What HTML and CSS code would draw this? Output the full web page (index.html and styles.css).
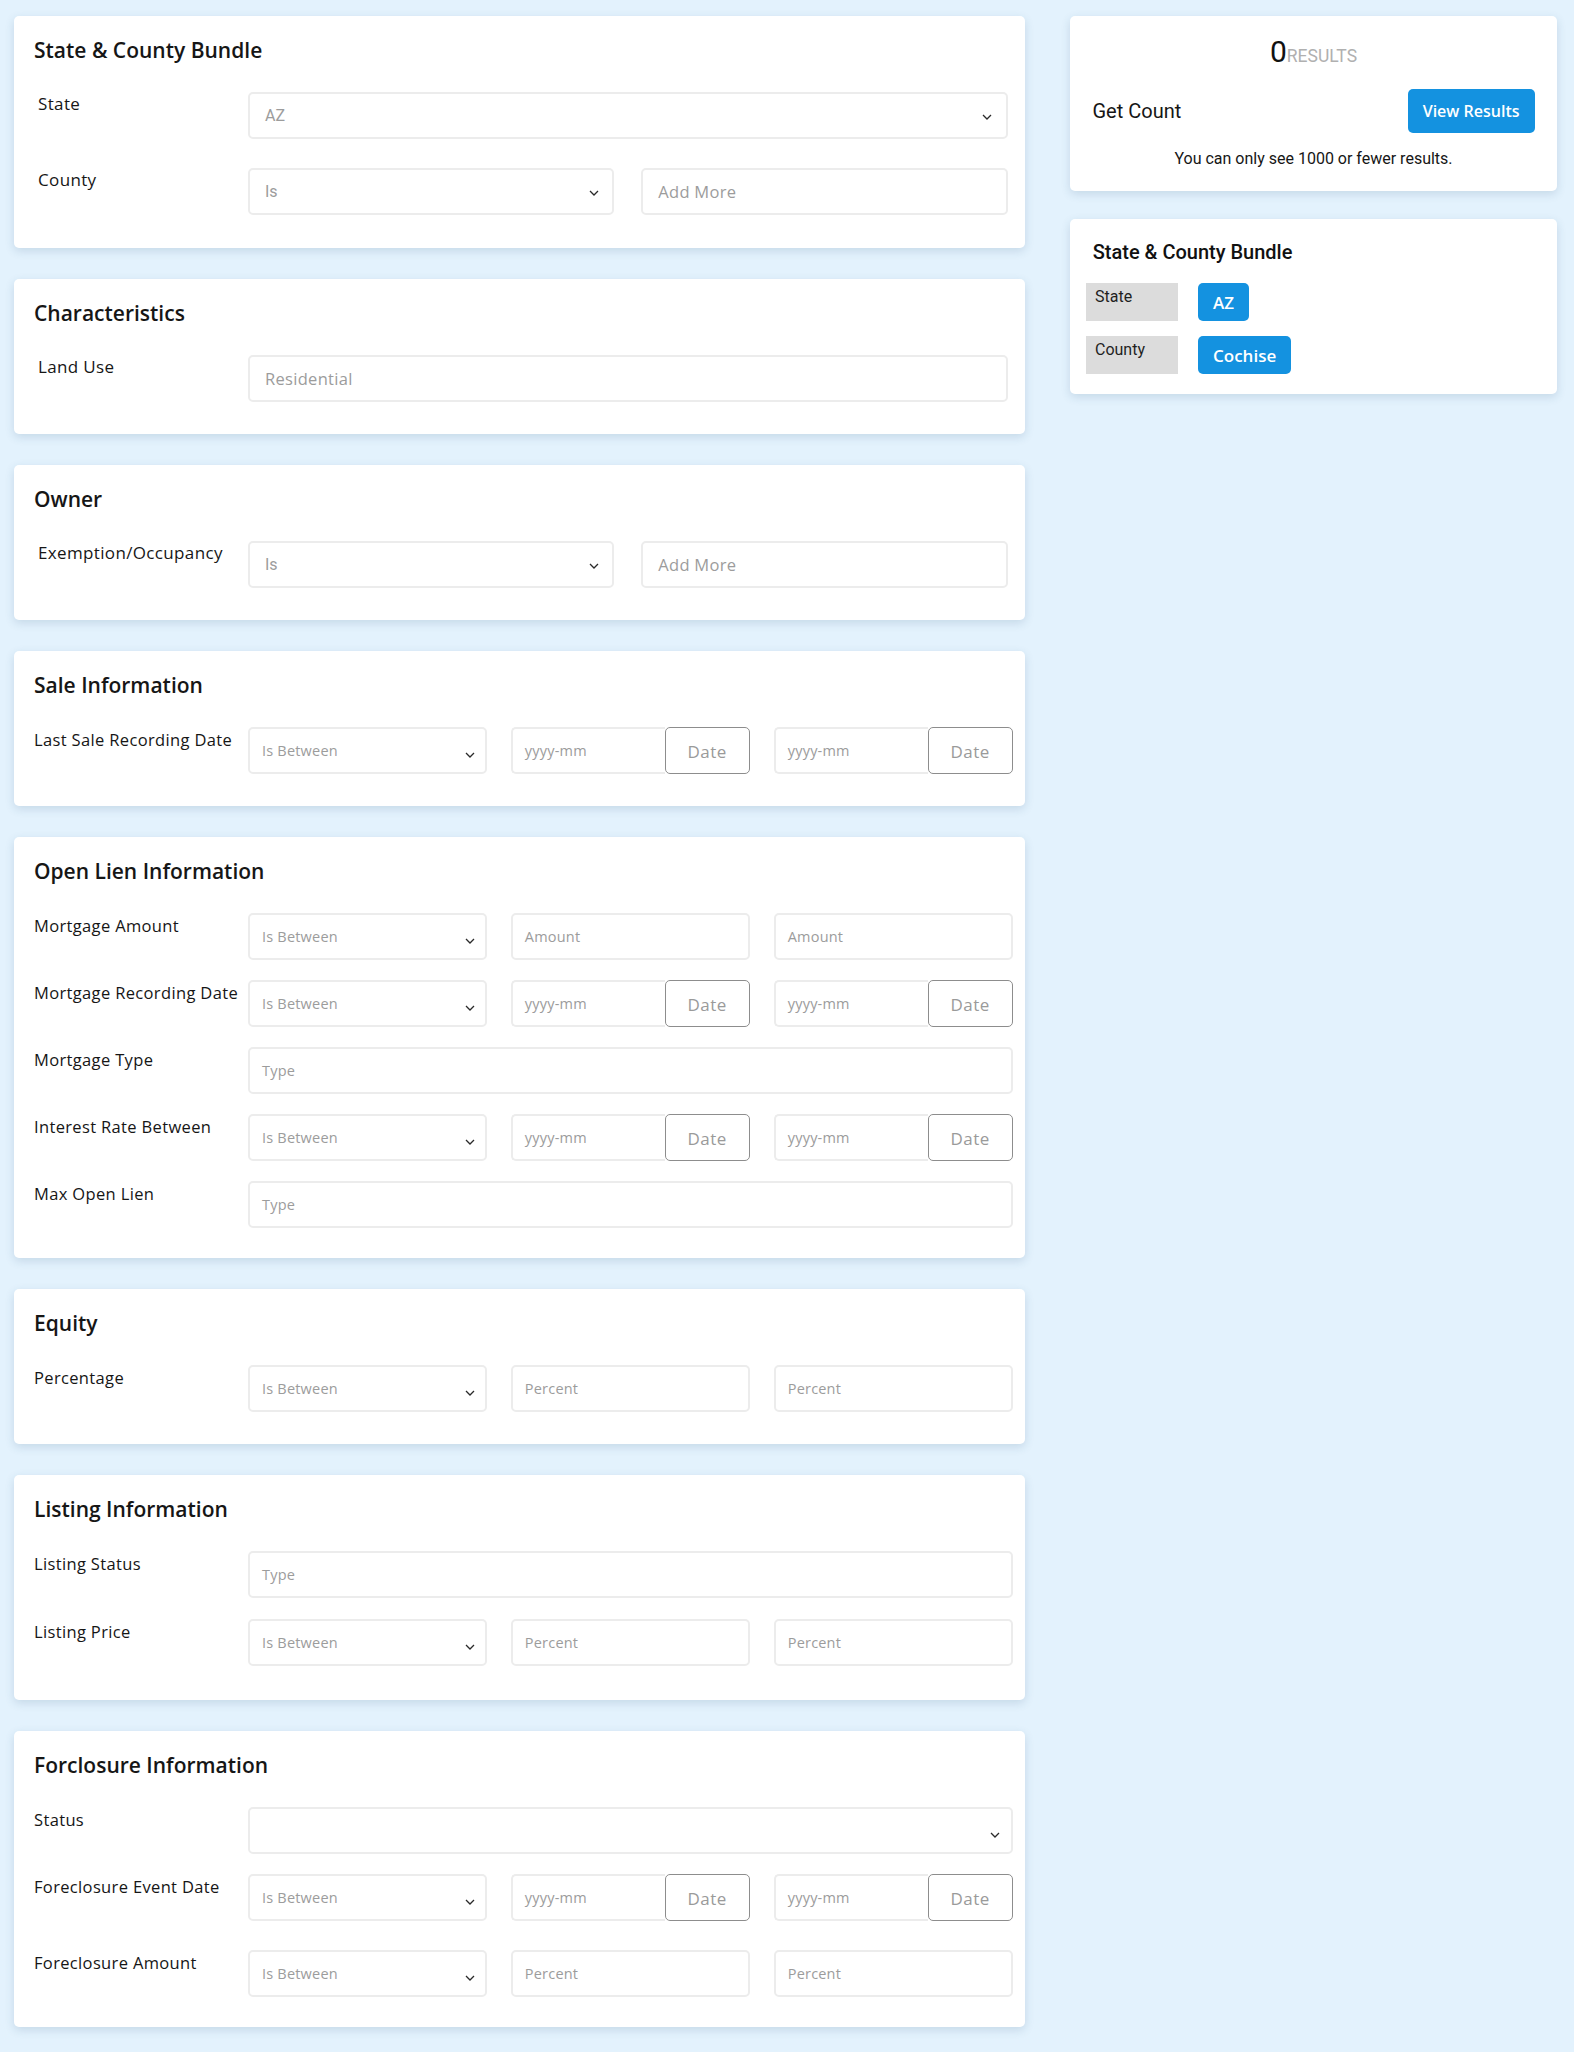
FILE: index.html
```html
<!DOCTYPE html>
<html lang="en">
<head>
<meta charset="utf-8">
<title>Search Filters</title>
<link rel="stylesheet" href="styles.css">
</head>
<body>
<div class="page">
  <main class="filters">

    <section class="card card--simple card--bundle">
      <h2 class="card-title">State &amp; County Bundle</h2>
      <div class="rows rows--loose">
        <div class="row">
          <div class="label">State</div>
          <div class="controls">
            <div class="field field--lg select select--lg"><span>AZ</span><svg class="chev" width="10" height="6" viewBox="0 0 10 6"><path d="M1 1 L5 5 L9 1"/></svg></div>
          </div>
        </div>
        <div class="row">
          <div class="label">County</div>
          <div class="controls controls--two">
            <div class="field field--lg select select--lg"><span>Is</span><svg class="chev" width="10" height="6" viewBox="0 0 10 6"><path d="M1 1 L5 5 L9 1"/></svg></div>
            <div class="field field--lg field--text"><span>Add More</span></div>
          </div>
        </div>
      </div>
    </section>

    <section class="card card--simple">
      <h2 class="card-title">Characteristics</h2>
      <div class="rows">
        <div class="row">
          <div class="label">Land Use</div>
          <div class="controls">
            <div class="field field--lg field--text"><span>Residential</span></div>
          </div>
        </div>
      </div>
    </section>

    <section class="card card--simple">
      <h2 class="card-title">Owner</h2>
      <div class="rows">
        <div class="row">
          <div class="label">Exemption/Occupancy</div>
          <div class="controls controls--two">
            <div class="field field--lg select select--lg"><span>Is</span><svg class="chev" width="10" height="6" viewBox="0 0 10 6"><path d="M1 1 L5 5 L9 1"/></svg></div>
            <div class="field field--lg field--text"><span>Add More</span></div>
          </div>
        </div>
      </div>
    </section>

    <section class="card">
      <h2 class="card-title">Sale Information</h2>
      <div class="rows">
        <div class="row">
          <div class="label">Last Sale Recording Date</div>
          <div class="controls controls--three">
            <div class="field select"><span>Is Between</span><svg class="chev" width="10" height="6" viewBox="0 0 10 6"><path d="M1 1 L5 5 L9 1"/></svg></div>
            <div class="date-group"><div class="field"><span>yyyy-mm</span></div><div class="date-btn">Date</div></div>
            <div class="date-group"><div class="field"><span>yyyy-mm</span></div><div class="date-btn">Date</div></div>
          </div>
        </div>
      </div>
    </section>

    <section class="card card--end-tight">
      <h2 class="card-title">Open Lien Information</h2>
      <div class="rows">
        <div class="row">
          <div class="label">Mortgage Amount</div>
          <div class="controls controls--three">
            <div class="field select"><span>Is Between</span><svg class="chev" width="10" height="6" viewBox="0 0 10 6"><path d="M1 1 L5 5 L9 1"/></svg></div>
            <div class="field"><span>Amount</span></div>
            <div class="field"><span>Amount</span></div>
          </div>
        </div>
        <div class="row">
          <div class="label">Mortgage Recording Date</div>
          <div class="controls controls--three">
            <div class="field select"><span>Is Between</span><svg class="chev" width="10" height="6" viewBox="0 0 10 6"><path d="M1 1 L5 5 L9 1"/></svg></div>
            <div class="date-group"><div class="field"><span>yyyy-mm</span></div><div class="date-btn">Date</div></div>
            <div class="date-group"><div class="field"><span>yyyy-mm</span></div><div class="date-btn">Date</div></div>
          </div>
        </div>
        <div class="row">
          <div class="label">Mortgage Type</div>
          <div class="controls">
            <div class="field"><span>Type</span></div>
          </div>
        </div>
        <div class="row">
          <div class="label">Interest Rate Between</div>
          <div class="controls controls--three">
            <div class="field select"><span>Is Between</span><svg class="chev" width="10" height="6" viewBox="0 0 10 6"><path d="M1 1 L5 5 L9 1"/></svg></div>
            <div class="date-group"><div class="field"><span>yyyy-mm</span></div><div class="date-btn">Date</div></div>
            <div class="date-group"><div class="field"><span>yyyy-mm</span></div><div class="date-btn">Date</div></div>
          </div>
        </div>
        <div class="row">
          <div class="label">Max Open Lien</div>
          <div class="controls">
            <div class="field"><span>Type</span></div>
          </div>
        </div>
      </div>
    </section>

    <section class="card">
      <h2 class="card-title">Equity</h2>
      <div class="rows">
        <div class="row">
          <div class="label">Percentage</div>
          <div class="controls controls--three">
            <div class="field select"><span>Is Between</span><svg class="chev" width="10" height="6" viewBox="0 0 10 6"><path d="M1 1 L5 5 L9 1"/></svg></div>
            <div class="field"><span>Percent</span></div>
            <div class="field"><span>Percent</span></div>
          </div>
        </div>
      </div>
    </section>

    <section class="card card--end-loose">
      <h2 class="card-title">Listing Information</h2>
      <div class="rows rows--listing">
        <div class="row">
          <div class="label">Listing Status</div>
          <div class="controls">
            <div class="field"><span>Type</span></div>
          </div>
        </div>
        <div class="row">
          <div class="label">Listing Price</div>
          <div class="controls controls--three">
            <div class="field select"><span>Is Between</span><svg class="chev" width="10" height="6" viewBox="0 0 10 6"><path d="M1 1 L5 5 L9 1"/></svg></div>
            <div class="field"><span>Percent</span></div>
            <div class="field"><span>Percent</span></div>
          </div>
        </div>
      </div>
    </section>

    <section class="card card--end-tight">
      <h2 class="card-title">Forclosure Information</h2>
      <div class="rows">
        <div class="row">
          <div class="label">Status</div>
          <div class="controls">
            <div class="field select select--status"><span></span><svg class="chev" width="10" height="6" viewBox="0 0 10 6"><path d="M1 1 L5 5 L9 1"/></svg></div>
          </div>
        </div>
        <div class="row">
          <div class="label">Foreclosure Event Date</div>
          <div class="controls controls--three">
            <div class="field select"><span>Is Between</span><svg class="chev" width="10" height="6" viewBox="0 0 10 6"><path d="M1 1 L5 5 L9 1"/></svg></div>
            <div class="date-group"><div class="field"><span>yyyy-mm</span></div><div class="date-btn">Date</div></div>
            <div class="date-group"><div class="field"><span>yyyy-mm</span></div><div class="date-btn">Date</div></div>
          </div>
        </div>
        <div class="row row--spaced">
          <div class="label">Foreclosure Amount</div>
          <div class="controls controls--three">
            <div class="field select"><span>Is Between</span><svg class="chev" width="10" height="6" viewBox="0 0 10 6"><path d="M1 1 L5 5 L9 1"/></svg></div>
            <div class="field"><span>Percent</span></div>
            <div class="field"><span>Percent</span></div>
          </div>
        </div>
      </div>
    </section>

  </main>

  <aside class="summary">
    <section class="card summary-card">
      <div class="results"><span class="results-count">0</span><span class="results-unit">RESULTS</span></div>
      <div class="count-row">
        <span class="count-label">Get Count</span>
        <span class="btn btn--view">View Results</span>
      </div>
      <p class="note">You can only see 1000 or fewer results.</p>
    </section>

    <section class="card bundle-card">
      <h3 class="bundle-title">State &amp; County Bundle</h3>
      <div class="chip-rows">
        <div class="chip-row">
          <span class="chip-label">State</span>
          <span class="btn chip">AZ</span>
        </div>
        <div class="chip-row">
          <span class="chip-label">County</span>
          <span class="btn chip">Cochise</span>
        </div>
      </div>
    </section>
  </aside>
</div>
</body>
</html>
```

FILE: styles.css
```css
* {
  box-sizing: border-box;
}

body {
  margin: 0;
  background: #e3f2fd;
  font-family: "Open Sans", "Noto Sans", sans-serif;
  color: #111;
}

.page {
  display: flex;
  align-items: flex-start;
  gap: 45px;
  padding: 16px 17px 20px 14px;
}

.filters {
  width: 1011px;
  flex: none;
  display: flex;
  flex-direction: column;
  gap: 31px;
}

.summary {
  width: 487px;
  flex: none;
  display: flex;
  flex-direction: column;
  gap: 28px;
}

.card {
  background: #fff;
  border-radius: 5px;
  box-shadow: 0 3px 10px rgba(40, 80, 120, 0.16);
  padding: 20px 12.4px 32px 20px;
}

.card--simple {
  padding-right: 17.5px;
}

.card--bundle {
  padding-bottom: 33px;
}

.card--end-tight {
  padding-bottom: 30px;
}

.card--end-loose {
  padding-bottom: 34px;
}

.card-title {
  margin: 0 0 28px;
  font-size: 21px;
  font-weight: 600;
  line-height: 28px;
  color: #161616;
}

.rows {
  display: flex;
  flex-direction: column;
  gap: 20px;
}

.rows--loose {
  gap: 29px;
}

.rows--listing {
  gap: 21px;
}

.row {
  display: grid;
  grid-template-columns: 214px 1fr;
  align-items: start;
}

.row--spaced {
  margin-top: 9px;
}

.label {
  font-size: 16.5px;
  letter-spacing: 0.35px;
  line-height: 24px;
  padding-top: 1px;
  color: #161616;
  white-space: nowrap;
}

.card--simple .label {
  font-size: 17px;
  padding-left: 4px;
  padding-top: 0;
}

.controls--two {
  display: grid;
  grid-template-columns: 1fr 1fr;
  gap: 27px;
}

.controls--three {
  display: grid;
  grid-template-columns: repeat(3, 1fr);
  gap: 24px;
}

.field {
  height: 47px;
  border: 2px solid #ececec;
  border-radius: 5px;
  background: #fff;
  display: flex;
  align-items: center;
  padding: 0 12px;
  font-size: 14.5px;
  letter-spacing: 0.2px;
  color: #9c9c9c;
  white-space: nowrap;
  min-width: 0;
}

.field--lg {
  padding: 0 15px;
  font-size: 16px;
  letter-spacing: 0;
}

.field--text {
  font-size: 16.5px;
  letter-spacing: 0.3px;
}

.select {
  justify-content: space-between;
  padding-right: 9.5px;
}

.select--lg {
  font-family: Roboto, "Open Sans", sans-serif;
  padding-right: 13.5px;
}

.select--status {
  padding-right: 10.5px;
}

.chev {
  flex: none;
  margin-top: 8px;
}

.select--lg .chev {
  margin-top: 3px;
}

.chev path {
  fill: none;
  stroke: #2a2a2a;
  stroke-width: 1.3;
}

.date-group {
  display: flex;
  height: 47px;
  min-width: 0;
}

.date-group .field {
  flex: 1;
  border-right: none;
  border-radius: 5px 0 0 5px;
}

.date-btn {
  flex: none;
  width: 85px;
  height: 47px;
  border: 1px solid #8d8d8d;
  border-radius: 5px;
  background: #fff;
  display: flex;
  align-items: center;
  justify-content: center;
  font-size: 17px;
  letter-spacing: 0.5px;
  padding-top: 2px;
  color: #9a9a9a;
}

/* Summary column */
.summary-card {
  padding: 17.5px 22.5px 20px;
}

.results {
  text-align: center;
  line-height: 36px;
  font-family: Roboto, sans-serif;
}

.results-count {
  font-size: 30px;
  color: #111;
}

.results-unit {
  font-size: 17.5px;
  color: #b0b0b0;
}

.count-row {
  display: flex;
  justify-content: space-between;
  align-items: center;
  margin-top: 14px;
}

.count-label {
  font-family: Roboto, sans-serif;
  font-size: 20px;
  color: #161616;
}

.btn {
  background: #1492e0;
  color: #fff;
  border-radius: 5px;
  font-weight: 600;
  display: inline-flex;
  align-items: center;
  justify-content: center;
}

.btn--view {
  height: 44px;
  padding: 0 15px;
  font-size: 16px;
}

.note {
  margin: 14px 0 0;
  text-align: center;
  font-family: Roboto, sans-serif;
  font-size: 16px;
  line-height: 24px;
  color: #161616;
}

.bundle-card {
  padding: 19.4px 16px 19.3px;
}

.bundle-title {
  margin: 0 0 17.6px;
  padding-left: 6.7px;
  font-family: Roboto, sans-serif;
  font-weight: 500;
  font-size: 20px;
  line-height: 28px;
  color: #111;
}

.chip-rows {
  display: flex;
  flex-direction: column;
  gap: 15px;
}

.chip-row {
  display: flex;
  gap: 20px;
  height: 38px;
}

.chip-label {
  width: 92px;
  height: 38px;
  background: #dcdcdc;
  font-family: Roboto, sans-serif;
  font-size: 16px;
  line-height: 24px;
  padding: 2px 9px;
  color: #1f1f1f;
}

.chip {
  height: 38px;
  padding: 0 15px;
  font-size: 17px;
}
```
